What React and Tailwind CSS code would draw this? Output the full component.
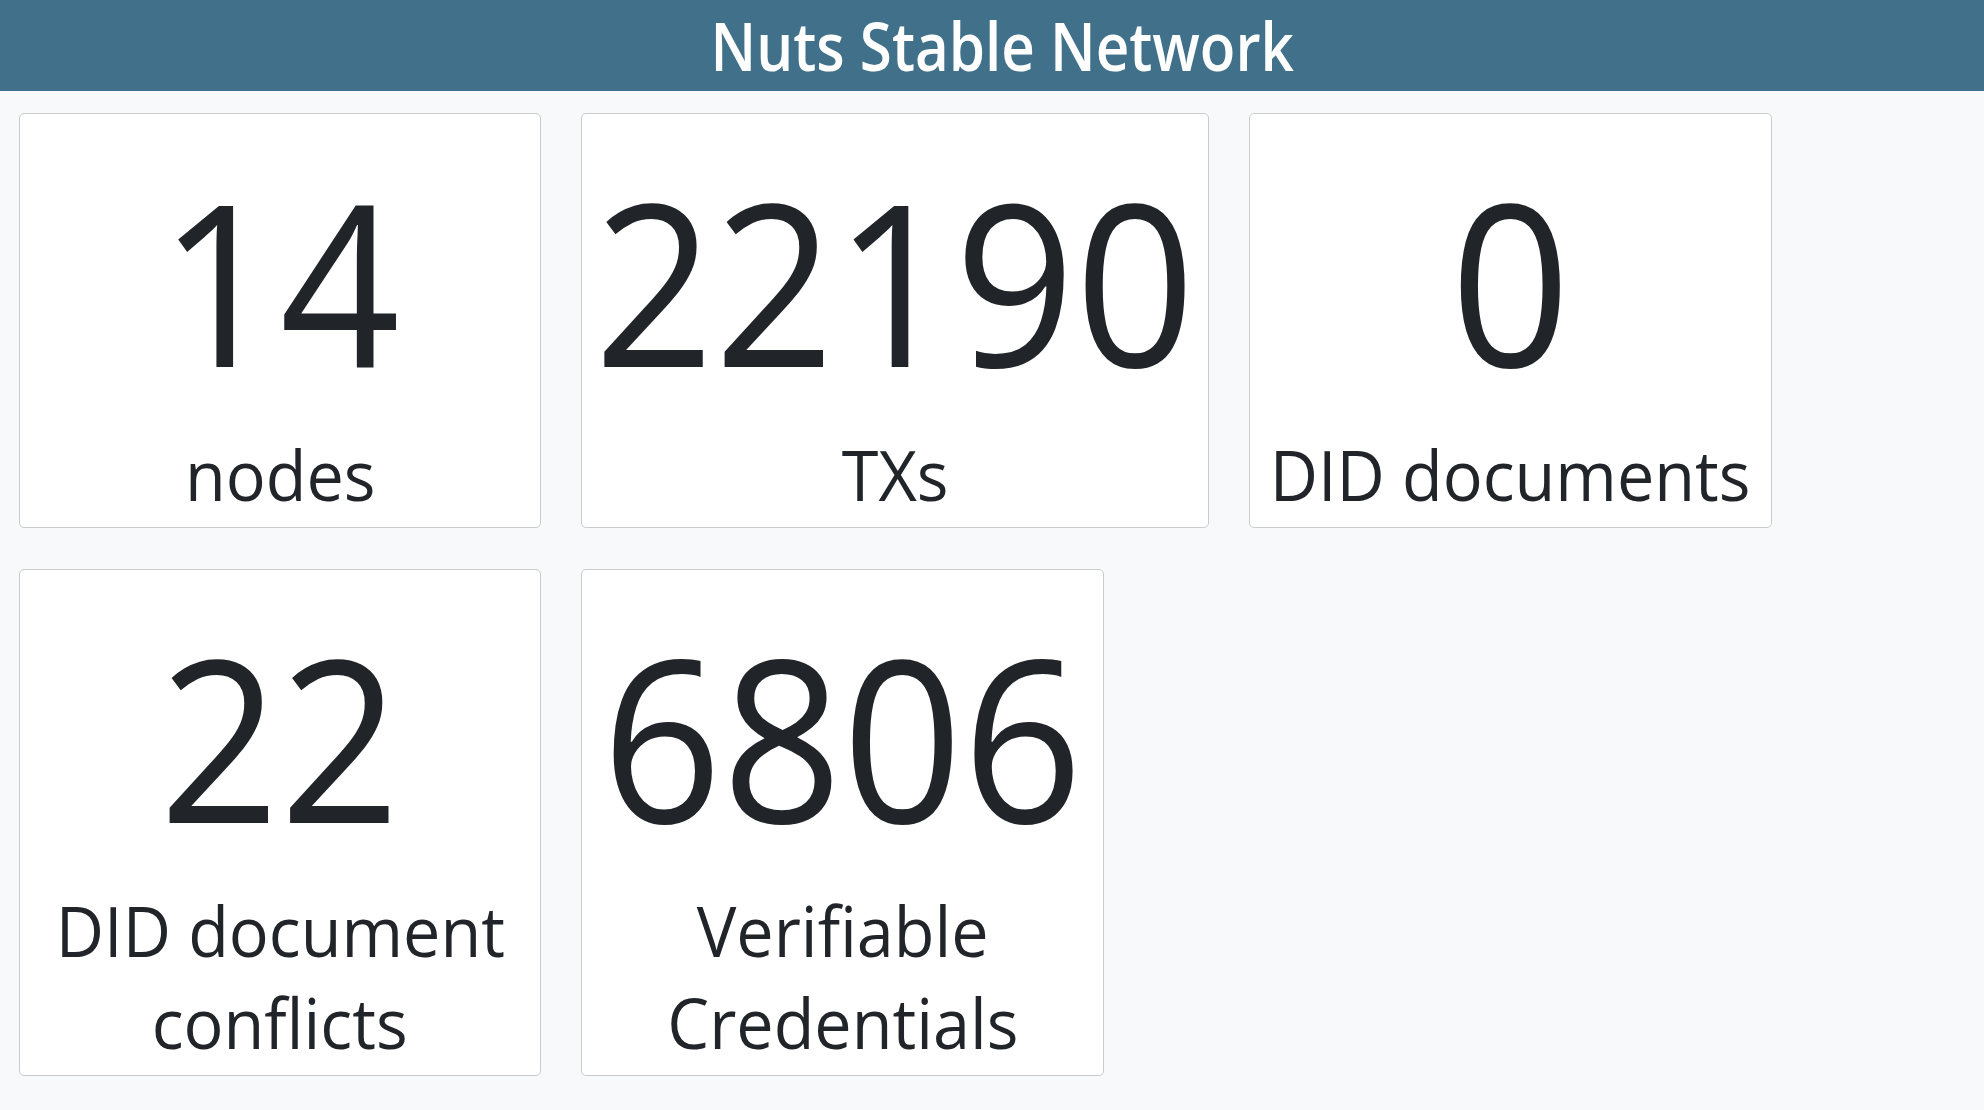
export default function App() {
  const cards = [
    { value: "14", lines: ["nodes"], w: "w-[522px]" },
    { value: "22190", lines: ["TXs"], w: "w-[628px]" },
    { value: "0", lines: ["DID documents"], w: "w-[523px]" },
    { value: "22", lines: ["DID document", "conflicts"], w: "w-[522px]" },
    { value: "6806", lines: ["Verifiable", "Credentials"], w: "w-[523px]" },
  ];
  return (
    <div className="min-h-[1110px] bg-[#f8f9fa] font-['Open_Sans','Noto_Sans',sans-serif] text-[#212529]">
      <header className="h-[91px] bg-[#41708a] flex items-center justify-center pl-[20px]">
        <h1 className="text-white text-[67px] leading-[91px] font-semibold whitespace-nowrap scale-x-[0.87]">
          Nuts Stable Network
        </h1>
      </header>
      <main className="pl-[19px] pt-[22px] pr-[19px] flex flex-wrap gap-x-[40px] gap-y-[41px]">
        {cards.map((c) => (
          <div
            key={c.value}
            className={`${c.w} bg-white border border-[#c9cbcd] rounded-[5px] flex flex-col items-center pt-[54px] pb-[7px] px-[18px] text-center`}
          >
            <div className="text-[225px] leading-[225px] whitespace-nowrap scale-x-[0.935]">
              {c.value}
            </div>
            <div className="mt-[35px] flex flex-col items-center">
              {c.lines.map((l) => (
                <div
                  key={l}
                  className="text-[70px] leading-[92px] whitespace-nowrap scale-x-[0.95]"
                >
                  {l}
                </div>
              ))}
            </div>
          </div>
        ))}
      </main>
    </div>
  );
}
